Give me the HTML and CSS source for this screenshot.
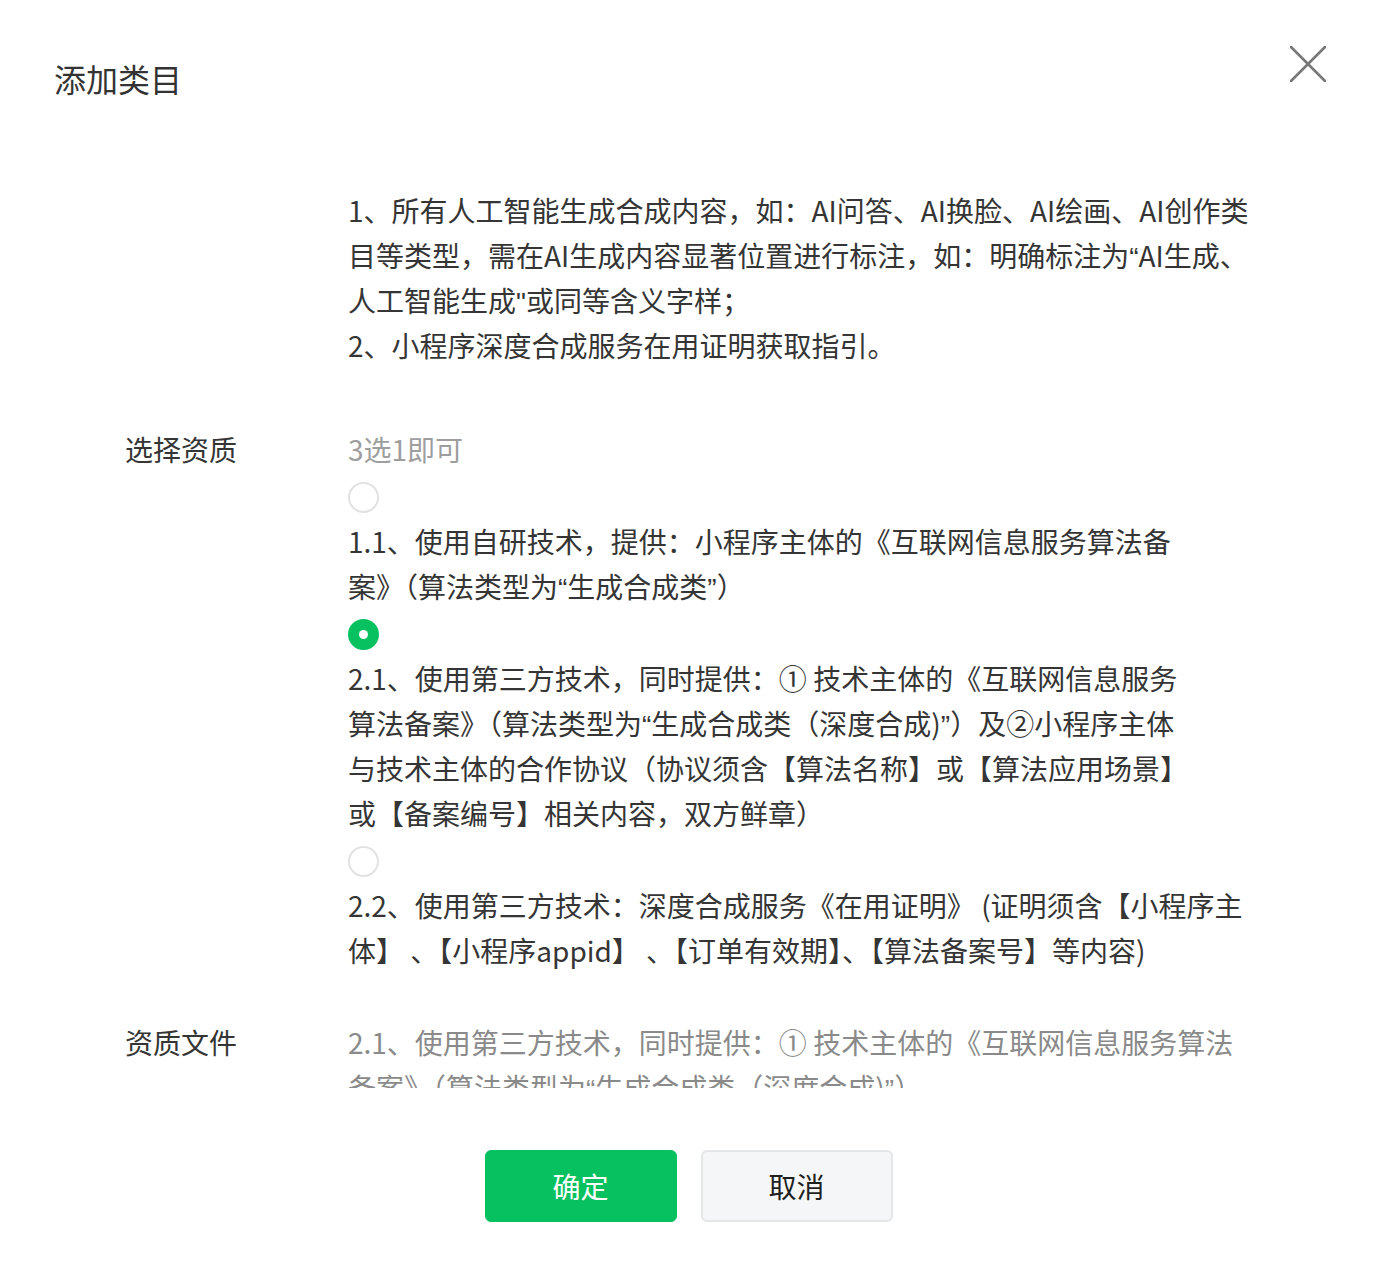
FILE: index.html
```html
<!DOCTYPE html>
<html lang="zh-CN">
<head>
<meta charset="utf-8">
<title>添加类目</title>
<link rel="stylesheet" href="styles.css">
</head>
<body>
<div class="dialog">
  <div class="header">
    <div class="title">添加类目</div>
    <button class="close" aria-label="关闭">
      <svg width="36" height="36" viewBox="0 0 36 36"><path d="M1 1 L35 35 M35 1 L1 35" stroke="#777" stroke-width="2.6" fill="none" stroke-linecap="round"/></svg>
    </button>
  </div>
  <div class="body">
    <div class="notice">1、所有人工智能生成合成内容，如：AI问答、AI换脸、AI绘画、AI创作类<br>目等类型，需在AI生成内容显著位置进行标注，如：明确标注为<span class="q">“</span>AI生成、<br>人工智能生成<span class="q">"</span>或同等含义字样；<br>2、小程序深度合成服务在用证明获取指引。</div>

    <div class="row">
      <div class="label">选择资质</div>
      <div class="field">
        <div class="hint">3选1即可</div>
        <div class="option">
          <span class="radio"></span>
          <div class="opt-text">1.1、使用自研技术，提供：小程序主体的《互联网信息服务算法备<br>案》（算法类型为<span class="q">“</span>生成合成类<span class="q">”</span>）</div>
        </div>
        <div class="option">
          <span class="radio checked"></span>
          <div class="opt-text">2.1、使用第三方技术，同时提供：① 技术主体的《互联网信息服务<br>算法备案》（算法类型为<span class="q">“</span>生成合成类（深度合成)<span class="q">”</span>）及②小程序主体<br>与技术主体的合作协议（协议须含【算法名称】或【算法应用场景】<br>或【备案编号】相关内容，双方鲜章）</div>
        </div>
        <div class="option">
          <span class="radio"></span>
          <div class="opt-text">2.2、使用第三方技术：深度合成服务《在用证明》 (证明须含【小程序主<br>体】 、【小程序appid】 、【订单有效期】、【算法备案号】等内容)</div>
        </div>
      </div>
    </div>

    <div class="row row-files">
      <div class="label">资质文件</div>
      <div class="field">
        <div class="file-text">2.1、使用第三方技术，同时提供：① 技术主体的《互联网信息服务算法<br>备案》（算法类型为<span class="q">“</span>生成合成类（深度合成)<span class="q">”</span>）</div>
      </div>
    </div>
  </div>
  <div class="footer">
    <button class="btn btn-primary">确定</button>
    <button class="btn btn-default">取消</button>
  </div>
</div>
</body>
</html>
```

FILE: styles.css
```css
* {
  box-sizing: border-box;
}

html, body {
  margin: 0;
  padding: 0;
  background: #ffffff;
}

body {
  font-family: "Noto Sans CJK SC", "Noto Sans", "Liberation Sans", sans-serif;
  color: #353535;
  width: 1384px;
  height: 1280px;
  overflow: hidden;
}

.dialog {
  width: 1384px;
  height: 1280px;
  display: flex;
  flex-direction: column;
}

.header {
  display: flex;
  justify-content: space-between;
  align-items: flex-start;
  padding: 46px 58px 0 54px;
  height: 140px;
  flex: none;
}

.title {
  margin-top: 10px;
  font-size: 32px;
  line-height: 45px;
  color: #333333;
}

.close {
  border: 0;
  padding: 0;
  margin: 0;
  background: transparent;
  width: 36px;
  height: 36px;
  cursor: pointer;
}

.close svg {
  display: block;
}

.body {
  height: 948px;
  overflow: hidden;
  flex: none;
  padding-top: 48px;
}

.notice {
  padding-left: 348px;
  font-size: 28px;
  line-height: 45px;
  white-space: nowrap;
  color: #353535;
}

.q {
  font-family: "Liberation Sans", "DejaVu Sans", sans-serif;
  line-height: 0;
}

.row {
  display: grid;
  grid-template-columns: 223px 1fr;
  padding-left: 125px;
  margin-top: 59px;
  font-size: 28px;
  line-height: 45px;
}

.row-files {
  margin-top: 47px;
}

.label {
  color: #353535;
  white-space: nowrap;
}

.field {
  white-space: nowrap;
}

.hint {
  color: #9e9e9e;
}

.option {
  display: flex;
  flex-direction: column;
}

.radio {
  display: block;
  width: 31px;
  height: 31px;
  margin: 10px 0 6px;
  border: 2px solid #e2e2e2;
  border-radius: 50%;
  background: #ffffff;
  position: relative;
}

.radio.checked {
  border-color: #07c160;
  background: #07c160;
}

.radio.checked::after {
  content: "";
  position: absolute;
  left: 50%;
  top: 50%;
  width: 9px;
  height: 9px;
  margin: -4.5px 0 0 -4.5px;
  border-radius: 50%;
  background: #ffffff;
}

.opt-text {
  color: #353535;
}

.file-text {
  color: #8a8a8a;
}

.footer {
  flex: none;
  display: flex;
  justify-content: center;
  gap: 24px;
  padding-top: 62px;
  padding-right: 7px;
}

.btn {
  width: 192px;
  height: 72px;
  border-radius: 6px;
  font-family: inherit;
  font-size: 28px;
  cursor: pointer;
}

.btn-primary {
  background: #07c160;
  border: 1px solid #07c160;
  color: #ffffff;
}

.btn-default {
  background: #f5f6f7;
  border: 2px solid #e4e6e8;
  color: #1f1f1f;
}
```
